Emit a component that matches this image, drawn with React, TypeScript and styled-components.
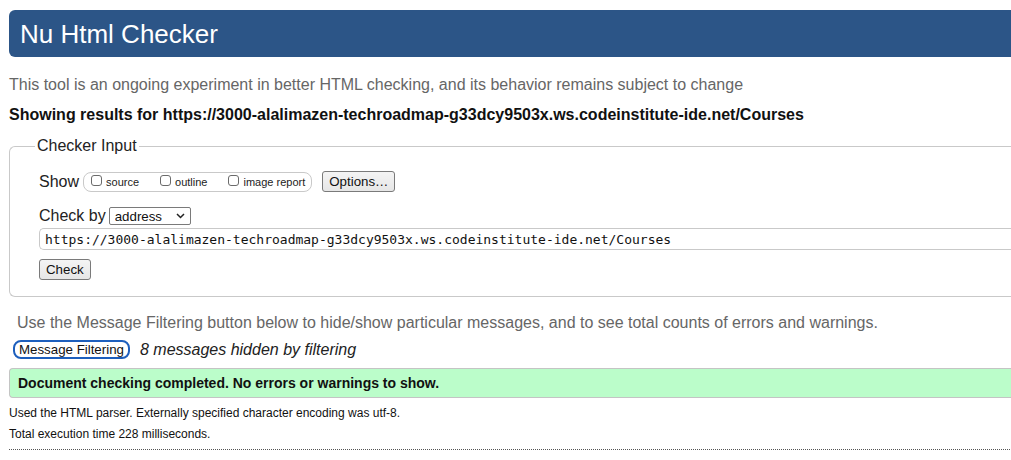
import React from "react";
import styled, { createGlobalStyle } from "styled-components";

const Global = createGlobalStyle`
  html, body { margin: 0; padding: 0; background: #fff; overflow: hidden; }
  body { font-family: "Liberation Sans", Arial, Helvetica, sans-serif; color: #222; }
  * { box-sizing: border-box; }
`;

const Page = styled.div`
  width: 1300px;
  padding: 10px 0 0 9px;
  display: flex;
  flex-direction: column;
`;

const Header = styled.header`
  height: 47px;
  background: #2c5587;
  border-radius: 6px 0 0 6px;
  display: flex;
  align-items: center;
  padding-left: 11px;
`;

const Title = styled.h1`
  margin: 0;
  font-size: 26px;
  font-weight: normal;
  color: #fff;
  line-height: 30px;
`;

const Text = styled.p<{ $mt: number; $indent?: number; $gray?: boolean; $bold?: boolean; $size?: number; $lh?: number }>`
  margin: ${(p) => p.$mt}px 0 0 ${(p) => p.$indent ?? 0}px;
  font-size: ${(p) => p.$size ?? 16}px;
  line-height: ${(p) => p.$lh ?? 18}px;
  color: ${(p) => (p.$gray ? "#666" : "#111")};
  font-weight: ${(p) => (p.$bold ? "bold" : "normal")};
  white-space: nowrap;
`;

const Fieldset = styled.fieldset`
  margin: 13px 0 0 0;
  border: 1px solid #c9c9c9;
  border-radius: 6px 0 0 6px;
  border-right: none;
  padding: 16px 0 16px 29px;
  display: flex;
  flex-direction: column;
`;

const Legend = styled.legend`
  margin-left: -4px;
  padding: 0 2px;
  font-size: 16px;
  line-height: 18px;
  color: #222;
`;

const Row = styled.div<{ $mt?: number }>`
  display: flex;
  align-items: center;
  margin-top: ${(p) => p.$mt ?? 0}px;
  font-size: 16px;
  color: #222;
`;

const Label = styled.span<{ $gap?: number }>`
  font-size: 16px;
  line-height: 18px;
  margin-right: ${(p) => p.$gap ?? 4}px;
`;

const CheckGroup = styled.div`
  display: flex;
  align-items: center;
  height: 20px;
  border: 1px solid #c9c9c9;
  border-radius: 8px;
  padding: 0 6px 0 7px;
  margin-right: 10px;
`;

const CheckItem = styled.label<{ $last?: boolean }>`
  display: flex;
  align-items: center;
  font-size: 11px;
  color: #222;
  margin-right: ${(p) => (p.$last ? 0 : 21)}px;
`;

const Box = styled.input`
  appearance: none;
  width: 11px;
  height: 11px;
  margin: 0 4px 2px 0;
  border: 1px solid #6b6b6b;
  border-radius: 3px;
  background: #fff;
`;

const Button = styled.button`
  font-family: "Liberation Sans", Arial, Helvetica, sans-serif;
  font-size: 13.3px;
  color: #111;
  height: 21px;
  padding: 0 6px;
  background: linear-gradient(#f4f4f4, #e6e6e6);
  border: 1px solid #7a7a7a;
  border-radius: 3px;
`;

const SelectWrap = styled.div`
  position: relative;
  display: inline-flex;
`;

const Select = styled.select`
  appearance: none;
  width: 82px;
  height: 18px;
  font-family: "Liberation Sans", Arial, Helvetica, sans-serif;
  font-size: 13.3px;
  color: #111;
  padding: 0 0 0 5px;
  border: 1px solid #7a7a7a;
  border-radius: 2px;
  background: #fff;
`;

const Chevron = styled.svg`
  position: absolute;
  right: 6px;
  top: 6px;
  pointer-events: none;
`;

const UrlInput = styled.input`
  margin-top: 3px;
  height: 22px;
  width: 100%;
  font-family: "DejaVu Sans Mono", "Liberation Mono", monospace;
  font-size: 13px;
  color: #111;
  padding: 0 0 0 5px;
  border: 1px solid #c9c9c9;
  border-right: none;
  border-radius: 5px 0 0 5px;
`;

const FilterRow = styled.div`
  display: flex;
  align-items: center;
  margin: 8px 0 0 4px;
`;

const FilterButton = styled.button`
  font-family: "Liberation Sans", Arial, Helvetica, sans-serif;
  font-size: 13.3px;
  color: #111;
  height: 19px;
  padding: 0 4px;
  background: #fff;
  border: 2px solid #1d5fbd;
  border-radius: 8px;
  margin-right: 10px;
`;

const Italic = styled.span`
  font-style: italic;
  font-size: 16px;
  color: #222;
`;

const Success = styled.div`
  margin-top: 9px;
  height: 30px;
  background: #bbfdca;
  border-top: 1px solid #c4c4c4;
  border-bottom: 1px solid #c4c4c4;
  border-left: 1px solid #c4c4c4;
  border-radius: 4px 0 0 4px;
  display: flex;
  align-items: center;
  padding-left: 8px;
  font-size: 14px;
  font-weight: bold;
  color: #111;
`;

const Dotted = styled.hr`
  margin: 8px 0 0 0;
  border: none;
  border-top: 1px dotted #555;
`;

export default function App() {
  return (
    <>
      <Global />
      <Page>
        <Header>
          <Title>Nu Html Checker</Title>
        </Header>
        <Text $mt={19} $gray>
          This tool is an ongoing experiment in better HTML checking, and its behavior remains subject to change
        </Text>
        <Text $mt={12} $bold>
          Showing results for https://3000-alalimazen-techroadmap-g33dcy9503x.ws.codeinstitute-ide.net/Courses
        </Text>
        <Fieldset>
          <Legend>Checker Input</Legend>
          <Row>
            <Label>Show</Label>
            <CheckGroup>
              <CheckItem>
                <Box type="checkbox" />
                source
              </CheckItem>
              <CheckItem>
                <Box type="checkbox" />
                outline
              </CheckItem>
              <CheckItem $last>
                <Box type="checkbox" />
                image report
              </CheckItem>
            </CheckGroup>
            <Button>Options…</Button>
          </Row>
          <Row $mt={15}>
            <Label $gap={3}>Check by</Label>
            <SelectWrap>
              <Select defaultValue="address">
                <option value="address">address</option>
                <option value="file">file upload</option>
                <option value="text">text input</option>
              </Select>
              <Chevron width="9" height="6" viewBox="0 0 9 6">
                <path d="M1 1 L4.5 4.5 L8 1" fill="none" stroke="#222" strokeWidth="1.5" />
              </Chevron>
            </SelectWrap>
          </Row>
          <UrlInput
            readOnly
            value="https://3000-alalimazen-techroadmap-g33dcy9503x.ws.codeinstitute-ide.net/Courses"
          />
          <Row $mt={9}>
            <Button>Check</Button>
          </Row>
        </Fieldset>
        <Text $mt={17} $indent={8} $gray>
          Use the Message Filtering button below to hide/show particular messages, and to see total counts of errors and warnings.
        </Text>
        <FilterRow>
          <FilterButton>Message Filtering</FilterButton>
          <Italic>8 messages hidden by filtering</Italic>
        </FilterRow>
        <Success>Document checking completed. No errors or warnings to show.</Success>
        <Text $mt={8} $size={12} $lh={14}>
          Used the HTML parser. Externally specified character encoding was utf-8.
        </Text>
        <Text $mt={7} $size={12} $lh={14}>
          Total execution time 228 milliseconds.
        </Text>
        <Dotted />
      </Page>
    </>
  );
}
